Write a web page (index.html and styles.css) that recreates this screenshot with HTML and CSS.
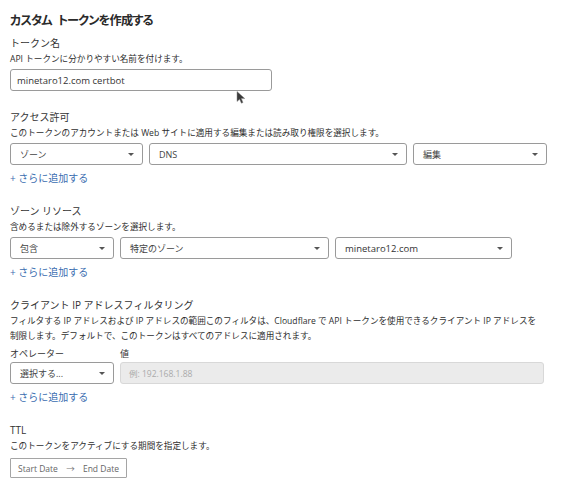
FILE: index.html
```html
<!DOCTYPE html>
<html lang="ja">
<head>
<meta charset="utf-8">
<link rel="stylesheet" href="styles.css">
</head>
<body>
<main class="page">
  <div class="title">カスタム トークンを作成する</div>

  <section class="section first">
    <div class="label">トークン名</div>
    <div class="desc">API トークンに分かりやすい名前を付けます。</div>
    <div class="input name-input">minetaro12.com certbot</div>
  </section>

  <section class="section">
    <div class="label">アクセス許可</div>
    <div class="desc">このトークンのアカウントまたは Web サイトに適用する編集または読み取り権限を選択します。</div>
    <div class="row">
      <div class="select w133"><span>ゾーン</span><i class="caret"></i></div>
      <div class="select w258"><span>DNS</span><i class="caret"></i></div>
      <div class="select w134"><span>編集</span><i class="caret"></i></div>
    </div>
    <a class="add">+ さらに追加する</a>
  </section>

  <section class="section">
    <div class="label">ゾーン リソース</div>
    <div class="desc">含めるまたは除外するゾーンを選択します。</div>
    <div class="row">
      <div class="select w104"><span>包含</span><i class="caret"></i></div>
      <div class="select w209"><span>特定のゾーン</span><i class="caret"></i></div>
      <div class="select w177 strong"><span>minetaro12.com</span><i class="caret"></i></div>
    </div>
    <a class="add">+ さらに追加する</a>
  </section>

  <section class="section">
    <div class="label">クライアント IP アドレスフィルタリング</div>
    <div class="desc wide">フィルタする IP アドレスおよび IP アドレスの範囲このフィルタは、Cloudflare で API トークンを使用できるクライアント IP アドレスを制限します。デフォルトで、このトークンはすべてのアドレスに適用されます。</div>
    <div class="ipgrid">
      <div class="field-label">オペレーター</div>
      <div class="field-label">値</div>
      <div class="select w104"><span>選択する...</span><i class="caret"></i></div>
      <div class="input disabled">例: 192.168.1.88</div>
    </div>
    <a class="add">+ さらに追加する</a>
  </section>

  <section class="section">
    <div class="label">TTL</div>
    <div class="desc">このトークンをアクティブにする期間を指定します。</div>
    <div class="daterange"><span>Start Date</span><span class="arrow">→</span><span>End Date</span></div>
  </section>

  <svg class="cursor" width="10" height="13" viewBox="0 0 10 13"><path d="M1 0.5 L1 10.5 L3.6 8.2 L5.4 12.2 L7 11.5 L5.3 7.6 L8.8 7.6 Z" fill="#3a3a3a" stroke="#888" stroke-width="0.5"/></svg>
</main>
</body>
</html>
```

FILE: styles.css
```css
* { box-sizing: border-box; }
html, body { margin: 0; padding: 0; background: #fff; }
body {
  font-family: "Open Sans", "Noto Sans CJK JP", sans-serif;
  color: #333;
}
.page {
  position: relative;
  width: 565px;
  height: 480px;
  padding: 11px 0 0 10px;
  overflow: hidden;
  display: flex;
  flex-direction: column;
}
.title {
  font-family: "Noto Sans CJK JP", sans-serif;
  font-size: 12.2px;
  line-height: 18px;
  font-weight: 700;
  color: #2a2a2a;
  font-feature-settings: "palt";
  letter-spacing: -0.8px;
  word-spacing: 4px;
}
.section {
  display: flex;
  flex-direction: column;
  align-items: flex-start;
  margin-top: 18px;
}
.section.first { margin-top: 6px; }
.label {
  font-size: 10px;
  line-height: 17px;
  color: #333;
}
.desc {
  font-size: 8.6px;
  line-height: 15px;
  color: #2e2e2e;
  margin-bottom: 2px;
}
.desc.wide { width: 532px; }
.input, .select {
  height: 22px;
  border: 1px solid #9a9a9a;
  border-radius: 3px;
  font-size: 9px;
  color: #444;
  display: flex;
  align-items: center;
  padding: 0 8px 0 6px;
  background: #fff;
}
.name-input { width: 262px; font-size: 9.5px; color: #333; }
.row { display: flex; gap: 6px; }
.select { justify-content: space-between; padding-left: 9px; }
.select.strong span { font-size: 9.5px; color: #333; }
.caret {
  width: 0; height: 0;
  border-left: 3px solid transparent;
  border-right: 3px solid transparent;
  border-top: 3.5px solid #555;
}
.w133 { width: 133px; }
.w258 { width: 258px; }
.w134 { width: 134px; }
.w104 { width: 104px; }
.w209 { width: 209px; }
.w177 { width: 177px; }
.add {
  margin-top: 6px;
  font-size: 10px;
  line-height: 14px;
  color: #3a6db0;
}
.ipgrid {
  display: grid;
  grid-template-columns: 104px 424px;
  column-gap: 6px;
}
.field-label {
  font-size: 9px;
  line-height: 15px;
  color: #333;
  margin-bottom: 1px;
}
.input.disabled {
  background: #ebebeb;
  border-color: #d8d8d8;
  color: #aaa;
  font-size: 8.5px;
  padding-left: 8px;
}
.daterange {
  margin-top: 2px;
  height: 20px;
  width: 117px;
  border: 1px solid #a5a5a5;
  border-radius: 1px;
  display: flex;
  align-items: center;
  justify-content: space-between;
  padding: 0 7px;
  font-size: 8.5px;
  color: #666;
  white-space: nowrap;
}
.daterange .arrow { color: #777; }
.cursor { position: absolute; left: 236px; top: 91px; }
```
